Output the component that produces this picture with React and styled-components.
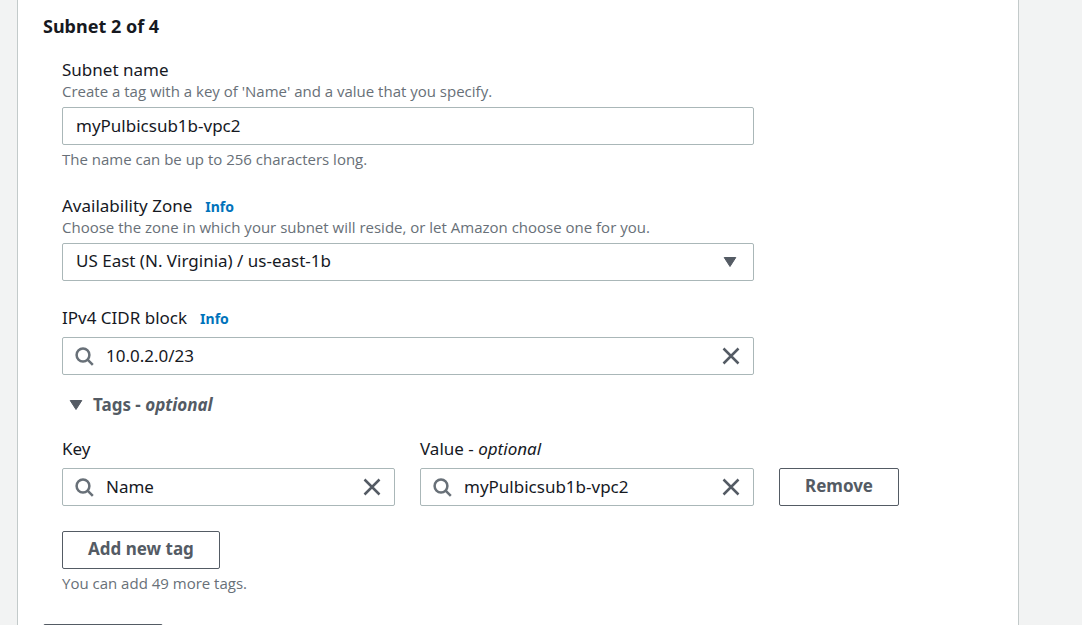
import React, { useState } from "react";
import styled, { createGlobalStyle } from "styled-components";

const GlobalStyle = createGlobalStyle`
  *, *::before, *::after { box-sizing: border-box; }
  body {
    margin: 0;
    background: #f2f3f3;
    color: #16191f;
    font-family: "Noto Sans", "Open Sans", sans-serif;
    font-size: 17px;
    line-height: 24px;
  }
  button, input, select { font: inherit; color: inherit; }
`;

const Page = styled.main`
  height: 100vh;
  overflow: hidden;
  padding: 0 63px 0 17px;
`;

const Panel = styled.section`
  min-height: 100%;
  padding: 14px 25px 25px;
  background: #fff;
  border: solid #c3caca;
  border-width: 0 1px;
`;

const Title = styled.h2`
  margin: 0 0 20px;
  font-size: 18px;
  font-weight: 700;
`;

const Fields = styled.div`
  padding: 0 19px;
`;

const Field = styled.div`
  display: flex;
  flex-direction: column;
  max-width: 692px;
  margin-bottom: ${(p) => (p.$tight ? 18 : 25)}px;
`;

const LabelRow = styled.div`
  display: flex;
  gap: 13px;
  margin-bottom: ${(p) => (p.$hinted ? 0 : 7)}px;
`;

const InfoLink = styled.a`
  color: #0073bb;
  font-size: 14px;
  font-weight: 700;
  line-height: 26px;
  height: 24px;
  text-decoration: none;
`;

const Hint = styled.p`
  margin: ${(p) => (p.$below ? "5px 0 1px" : "0 0 7px")};
  color: #687078;
  font-family: "Open Sans", "Noto Sans", sans-serif;
  font-size: 15px;
  line-height: 18px;
`;

const Control = styled.div`
  display: flex;
  align-items: center;
  height: 38px;
  padding: 0 13px 0 12px;
  background: #fff;
  border: 1px solid #aab7b8;
  border-radius: 2px;
`;

const TextInput = styled.input`
  flex: 1;
  min-width: 0;
  height: 100%;
  padding: 0 0 2px 1px;
  background: none;
  border: 0;
  outline: 0;
`;

const SelectWrap = styled.div`
  position: relative;
`;

const Select = styled.select`
  appearance: none;
  width: 100%;
  height: 38px;
  padding: 0 40px 2px 13px;
  background: #fff;
  border: 1px solid #aab7b8;
  border-radius: 2px;
`;

const SelectCaret = styled.span`
  position: absolute;
  top: 0;
  right: 17px;
  display: flex;
  align-items: center;
  height: 100%;
  pointer-events: none;
`;

const SearchSvg = styled.svg`
  flex: none;
  margin-right: 11px;
`;

const ClearButton = styled.button`
  display: flex;
  padding: 0;
  background: none;
  border: 0;
`;

const Toggle = styled.button`
  display: flex;
  align-items: center;
  gap: 10px;
  margin-bottom: 20px;
  padding: 0 7px;
  color: #545b64;
  background: none;
  border: 0;
  font-weight: 700;
`;

const TagRow = styled.div`
  display: grid;
  grid-template-columns: minmax(0, 333px) minmax(0, 334px) auto;
  justify-content: start;
  align-items: end;
  gap: 25px;
  margin-bottom: 25px;
`;

const TagField = styled.div`
  display: flex;
  flex-direction: column;
  gap: 7px;
`;

const Button = styled.button`
  height: 38px;
  min-width: 120px;
  padding: 0 25px 2px;
  color: #545b64;
  background: #fff;
  border: 1px solid #545b64;
  border-radius: 2px;
  font-weight: 700;
`;

const Footer = styled.div`
  margin-top: 32px;
`;

const SearchIcon = () => (
  <SearchSvg width="19" height="19" viewBox="0 0 19 19" fill="none" stroke="#687078" strokeWidth="2.5" aria-hidden="true">
    <circle cx="8" cy="8" r="6.4" />
    <path d="M12.6 12.6l5.2 5.2" />
  </SearchSvg>
);

const Caret = () => (
  <svg width="14" height="12" viewBox="0 0 14 12" fill="#545b64" stroke="#545b64" strokeLinejoin="round" aria-hidden="true">
    <path d="M1.2 1.5h11.6L7 10.5z" />
  </svg>
);

function SearchInput({ id, initial }) {
  const [value, setValue] = useState(initial);
  return (
    <Control>
      <SearchIcon />
      <TextInput id={id} value={value} onChange={(e) => setValue(e.target.value)} />
      <ClearButton type="button" aria-label="Clear" onClick={() => setValue("")}>
        <svg width="18" height="18" viewBox="0 0 18 18" fill="none" stroke="#545b64" strokeWidth="2.5" aria-hidden="true">
          <path d="M1.5 1.5l15 15M16.5 1.5l-15 15" />
        </svg>
      </ClearButton>
    </Control>
  );
}

export default function App() {
  const [open, setOpen] = useState(true);
  return (
    <Page>
      <GlobalStyle />
      <Panel>
        <Title>Subnet 2 of 4</Title>
        <Fields>
          <Field>
            <LabelRow $hinted>
              <label htmlFor="subnet-name">Subnet name</label>
            </LabelRow>
            <Hint>Create a tag with a key of 'Name' and a value that you specify.</Hint>
            <Control>
              <TextInput id="subnet-name" defaultValue="myPulbicsub1b-vpc2" />
            </Control>
            <Hint $below>The name can be up to 256 characters long.</Hint>
          </Field>

          <Field>
            <LabelRow $hinted>
              <label htmlFor="zone">Availability Zone</label>
              <InfoLink href="#zone-info">Info</InfoLink>
            </LabelRow>
            <Hint>Choose the zone in which your subnet will reside, or let Amazon choose one for you.</Hint>
            <SelectWrap>
              <Select id="zone">
                <option>US East (N. Virginia) / us-east-1b</option>
              </Select>
              <SelectCaret>
                <Caret />
              </SelectCaret>
            </SelectWrap>
          </Field>

          <Field $tight>
            <LabelRow>
              <label htmlFor="cidr">IPv4 CIDR block</label>
              <InfoLink href="#cidr-info">Info</InfoLink>
            </LabelRow>
            <SearchInput id="cidr" initial="10.0.2.0/23" />
          </Field>

          <Toggle type="button" aria-expanded={open} onClick={() => setOpen(!open)}>
            <Caret />
            <span>
              Tags - <em>optional</em>
            </span>
          </Toggle>

          {open && (
            <>
              <TagRow>
                <TagField>
                  <label htmlFor="tag-key">Key</label>
                  <SearchInput id="tag-key" initial="Name" />
                </TagField>
                <TagField>
                  <label htmlFor="tag-value">
                    Value - <em>optional</em>
                  </label>
                  <SearchInput id="tag-value" initial="myPulbicsub1b-vpc2" />
                </TagField>
                <Button type="button">Remove</Button>
              </TagRow>
              <Button type="button">Add new tag</Button>
              <Hint $below>You can add 49 more tags.</Hint>
            </>
          )}
        </Fields>
        <Footer>
          <Button type="button" aria-label="Remove subnet" />
        </Footer>
      </Panel>
    </Page>
  );
}
